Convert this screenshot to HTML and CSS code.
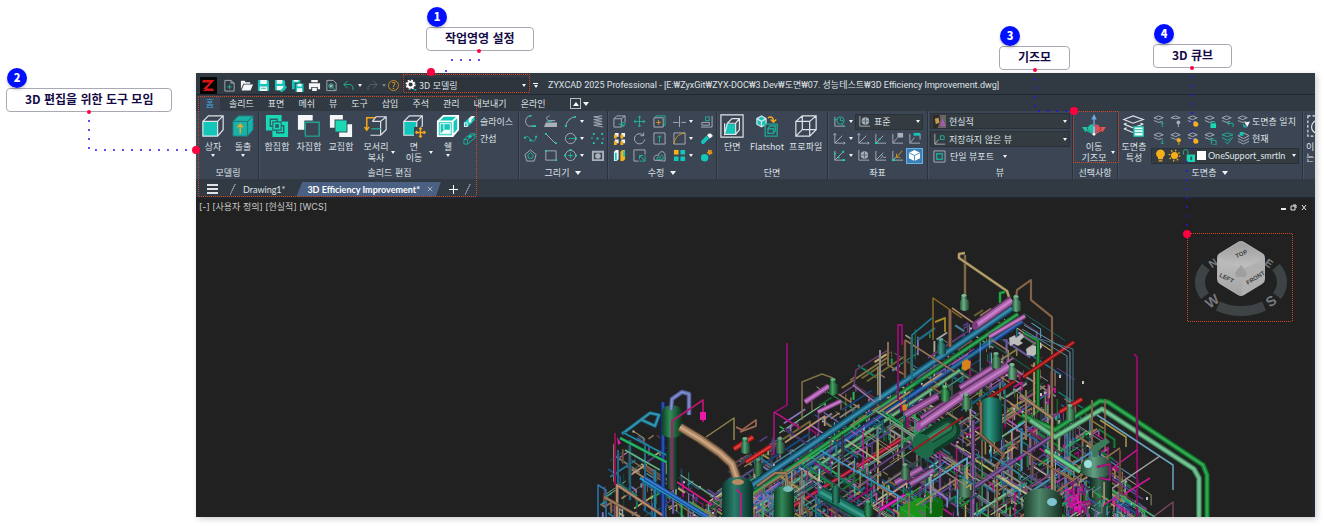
FILE: index.html
```html
<!DOCTYPE html>
<html lang="ko">
<head>
<meta charset="utf-8">
<title>ZYXCAD 2025 Professional</title>
<link rel="stylesheet" href="styles.css">
</head>
<body>
<svg class="defs" aria-hidden="true">
  <symbol id="i-new" viewBox="0 0 14 14"><path class="g" d="M2 1.500h6.500l3.500 3V13H2zM8.500 1.500v3H12"/><path class="t" d="M7 6v5M4.500 8.500h5"/></symbol>
  <symbol id="i-open" viewBox="0 0 14 14"><path class="wf" d="M1 2h4l1 1.500h5V5H3.500L1 11z"/><path class="wf" d="M4.200 6H14l-2.700 6.500H1.600z"/></symbol>
  <symbol id="i-save" viewBox="0 0 14 14"><path class="tf" d="M1 1h10.500L13 2.500V13H1z"/><path class="wf" d="M3.500 1h7v4.500h-7zM3 8h8v5H3z"/><path class="t" d="M4.500 10h5"/></symbol>
  <symbol id="i-saveas" viewBox="0 0 14 14"><path class="tf" d="M1 1h9.500L12 2.500V12H1z"/><path class="wf" d="M3 1h6v4H3zM3 7.500h7V12H3z"/><path class="tf" d="M7 12l5-5 2 2-5 5H7z"/></symbol>
  <symbol id="i-saveall" viewBox="0 0 14 14"><path class="tf" d="M1 1h9v3H4v7H1z"/><path class="tf" d="M5 5h8.500v9H5z"/><path class="wf" d="M3 1h5v2H3zM7 5h4.500v3H7zM6.500 10H12v4H6.500z"/></symbol>
  <symbol id="i-print" viewBox="0 0 14 14"><path class="wf" d="M3.500 1h7v2.500h-7zM1 4.500h12V11h-2.500V8.500h-7V11H1zM4.500 9.500h5V13h-5z"/></symbol>
  <symbol id="i-preview" viewBox="0 0 14 14"><path class="g" d="M2 12.500V1.500h7l3 3v8z"/><circle class="t" cx="6.500" cy="7.500" r="2.500"/><path class="gf" d="M5 6h3v3H5z"/><path class="t" d="M8.500 9.500L11 12"/></symbol>
  <symbol id="i-undo" viewBox="0 0 14 14"><path class="t" d="M6 2L2 6l4 4M2 6h6c3 0 4 2 4 6"/></symbol>
  <symbol id="i-redo" viewBox="0 0 14 14"><path class="d" d="M8 2l4 4-4 4M12 6H6c-3 0-4 2-4 6"/></symbol>
  <symbol id="i-gear" viewBox="0 0 14 14"><circle cx="6" cy="6" r="3.200" fill="none" stroke="#fff" stroke-width="2"/><circle cx="6" cy="6" r="4.700" fill="none" stroke="#fff" stroke-width="1.500" stroke-dasharray="1.900 1.800"/><path class="tf" d="M9 11h4l-2 2z"/></symbol>

  <symbol id="i-box" viewBox="0 0 26 26"><path class="tf" d="M2 8h16v16H2z"/><path class="W" d="M2 8h16v16H2zM2 8l6-6h16v15l-6 7M18 8l6-6"/></symbol>
  <symbol id="i-extrude" viewBox="0 0 26 26"><path fill="#18b3a8" d="M2 8l6-6h16v15l-6 7H2z"/><path class="D" d="M2 8h16v16M18 8l6-6M2 8l6-6h16v15l-6 7H2z"/><path class="Y" d="M10 21v-9M7 14.500l3-3.500 3 3.500"/></symbol>
  <symbol id="i-union" viewBox="0 0 26 26"><path class="ef" d="M1 1h17v7h7v17H8v-7H1z"/><path fill="#2a5f66" d="M5 5h9v3h-1.500V6.500h-6v6H8V14H5zM21 21h-9v-3h1.500v1.500h6v-6H18V12h3z"/><path fill="none" stroke="#2a5f66" stroke-width="1.200" d="M8.500 8.500h9v9h-9z"/><path fill="#2a5f66" d="M11 11h4v4h-4z"/></symbol>
  <symbol id="i-subtract" viewBox="0 0 26 26"><path class="wf" d="M1 1h16v6H8v10H1z"/><path class="t2" d="M9 9h15v15H9z"/></symbol>
  <symbol id="i-intersect" viewBox="0 0 26 26"><path class="wf" d="M1 1h14v5H6v9H1zM20 11h5v14H11v-5h9z"/><path class="ef" d="M7 7h12v12H7z"/></symbol>
  <symbol id="i-edgecopy" viewBox="0 0 26 26"><path class="W" d="M9 8l4-5h11v14l-6 6H7M9 8h9v15M18 8l6-5"/><path class="t2" d="M8 16h10"/><path class="Y" d="M12 4H3v13M0.500 14L3 17.500 5.500 14"/></symbol>
  <symbol id="i-facemove" viewBox="0 0 26 26"><path class="tf" d="M2 8h14v15H2z"/><path class="W" d="M2 8h14v15H2zM2 8l6-6h14v11l-5 6M16 8l6-6"/><path fill="#3b4554" d="M13 14h13v12H13z"/><path class="Y" d="M20 15v10M15 20h10M18.500 16.500L20 15l1.500 1.500M18.500 23.500L20 25l1.500-1.500M16.500 18.500L15 20l1.500 1.500M23.500 18.500L25 20l-1.500 1.500"/></symbol>
  <symbol id="i-shell" viewBox="0 0 26 26"><path class="tf" d="M2 8l6-6h16v15l-6 7H2z"/><path class="W2" d="M2 8h16v16H2zM2 8l6-6h16v15l-6 7M18 8l6-6"/><path fill="#fff" d="M4 10h12v12H4z"/><path class="tf" d="M5 11h10v10H5z"/><path fill="#fff" d="M5 21l4-4h6l0 4zM8 11h1v6H8z"/></symbol>
  <symbol id="i-slice" viewBox="0 0 14 14"><path class="tf" d="M1 8l7-6h4l1 3-8 8H1z"/><path class="wf" d="M6 4l3-3h4L9 5v3L6 8zM1 8h4v5L1 13z"/><path class="tf" d="M2 9h2v3H2z"/></symbol>
  <symbol id="i-interfere" viewBox="0 0 14 14"><path class="t" d="M1 8l7-6h5v4l-8 7H1zM1 8h4v5M5 8l8-6"/><path class="tf" d="M5 5l3 2 2-3-2-1z"/></symbol>

  <symbol id="i-pline" viewBox="0 0 14 14"><path class="g" d="M6 1C1 2 0 10 5 12h7"/><path class="T" d="M6 1h2M9 12h4"/></symbol>
  <symbol id="i-dpoly" viewBox="0 0 14 14"><path class="g" d="M6 1C2 2 2 5 5 6h7"/><path class="t" d="M3 7h6"/><path class="gf" d="M2 8h12v5H0z"/></symbol>
  <symbol id="i-arc" viewBox="0 0 14 14"><path class="g" d="M2 13C2 8 6 3 12 2"/><path class="T" d="M1 12h2M11 2h2M5 5h1"/></symbol>
  <symbol id="i-helix" viewBox="0 0 14 14"><path class="g" d="M12 1L3 2l9 2-9 1 9 2-9 1 9 2-9 1 10 2"/></symbol>
  <symbol id="i-spline" viewBox="0 0 14 14"><path class="t" d="M1 7c3-5 4-1 6 1s4 4 6-2"/><path class="T" d="M0 6h2M6 9h2M12 5h2"/></symbol>
  <symbol id="i-line" viewBox="0 0 14 14"><path class="g" d="M2 2l11 11"/><path class="T" d="M1 2h2M12 12h2"/></symbol>
  <symbol id="i-circle" viewBox="0 0 14 14"><circle class="g" cx="7" cy="7" r="5.500"/><path class="t" d="M5 7h8"/><path class="T" d="M12 7h2"/></symbol>
  <symbol id="i-points" viewBox="0 0 14 14"><path class="T" d="M2 2h2M11 2h2M6 7h2M2 12h2M11 12h2M1 6v1M13 7v1"/></symbol>
  <symbol id="i-poly" viewBox="0 0 14 14"><path class="g" d="M7 1l6 5-2 7H3L1 6z"/><path class="t" d="M7 4l3 2.500-1 3.500H5L4 6.500z"/></symbol>
  <symbol id="i-rect" viewBox="0 0 14 14"><path class="g" d="M2 2h11v10H2z"/><path class="T" d="M1 2h2M12 12h2"/></symbol>
  <symbol id="i-ellipse" viewBox="0 0 14 14"><circle class="g" cx="7" cy="7" r="5.500"/><path class="t" d="M7 4v6M4 7h6"/><path class="T" d="M6 1h2M12 7h2M0 7h2"/></symbol>
  <symbol id="i-region" viewBox="0 0 14 14"><path class="gf" fill-rule="evenodd" d="M1 2h13v11H1zM3 4h9v7H3z"/><circle class="gf" cx="7.500" cy="7.500" r="3"/></symbol>

  <symbol id="i-m3d" viewBox="0 0 14 14"><path class="g" d="M1 4l3-3h9v7M1 4h8v9H1zM9 4l4-3"/><path class="t" d="M6 10h5v3"/><circle class="t" cx="11" cy="10" r="2"/></symbol>
  <symbol id="i-move" viewBox="0 0 14 14"><path class="t" d="M7 1v12M1 7h12"/><path class="t" d="M5.500 3L7 1l1.500 2M5.500 11L7 13l1.500-2M3 5.500L1 7l2 1.500M11 5.500L13 7l-2 1.500"/></symbol>
  <symbol id="i-copy" viewBox="0 0 14 14"><path class="t" d="M3 3V1h10v10h-2"/><path class="g" d="M1 3h10v10H1z"/><path class="y" d="M6 5.500v5M3.500 8h5"/></symbol>
  <symbol id="i-trim" viewBox="0 0 14 14"><path class="g" d="M7 1v12M0 8h6M9 8h5"/></symbol>
  <symbol id="i-align" viewBox="0 0 14 14"><path class="g" d="M13 1v12H1M2 8h8v3H2z"/><path class="t" d="M6 2h4v4H6z"/></symbol>
  <symbol id="i-array3" viewBox="0 0 14 14"><path class="wf" d="M2 1h4v4H2zM9 1h4v4H9zM2 8h4v4H2zM9 8h4v4H9z"/><path class="yf" d="M1 3h3v4H1zM8 3h3v4H8zM1 10h3v4H1zM8 10h3v4H8z"/></symbol>
  <symbol id="i-rotate" viewBox="0 0 14 14"><path class="g" d="M11 3.500A5.500 5.500 0 1 0 12.500 8M11.500 0.500v3.500H8"/></symbol>
  <symbol id="i-stretch" viewBox="0 0 14 14"><path class="g" d="M1 1h12v12H1z"/><path class="t" d="M7 11V4M5 6l2-2 2 2"/></symbol>
  <symbol id="i-fillet" viewBox="0 0 14 14"><path class="g" d="M1 1h12v12H1z"/><path class="y" d="M1 13C2 6 6 2 13 1"/></symbol>
  <symbol id="i-erase" viewBox="0 0 14 14"><path class="tf" d="M1 10l6-6 3 3-6 6H2z"/><path class="wf" d="M7.500 3.500l2-2h2l2 2v1L10.500 7z"/></symbol>
  <symbol id="i-mirror" viewBox="0 0 14 14"><path class="wf" d="M1 3l2-2h3v10l-2 2H1z"/><path class="yf" d="M8 3l2-2h3v10l-2 2H8z"/><path class="tf" d="M2 4h2v8H2zM11 2h2v6h-2z"/></symbol>
  <symbol id="i-scale" viewBox="0 0 14 14"><path class="g" d="M6 13H1V1h12v5"/><path class="t" d="M7 7l6 6M7 11V7h4M7 13h6V7"/></symbol>
  <symbol id="i-offset" viewBox="0 0 14 14"><path class="g" d="M1 12c-1-5 3-6 5-5 0-5 7-6 7 0v6z"/><path class="t" d="M4 11c0-3 2-2 4-2 0-3 3-3 3 0v2z"/></symbol>
  <symbol id="i-array" viewBox="0 0 14 14"><path class="yf" d="M1 1h5v5H1z"/><path class="tf" d="M8 1h5v5H8zM1 8h5v5H1zM8 8h5v5H8z"/></symbol>
  <symbol id="i-explode" viewBox="0 0 14 14"><circle class="tf" cx="5" cy="9.500" r="4"/><circle cx="10.500" cy="3.500" r="2.200" fill="#dc981c" stroke="#dc981c" stroke-width="1.500" stroke-dasharray="1.500 1"/></symbol>

  <symbol id="i-section" viewBox="0 0 26 26"><path class="tf" d="M6 11h11v11H6z"/><path class="W" d="M1 1h24v24H1zM5 22l3-12h9v12zM8 10l5-5h8v12l-4 5M17 10l4-5M5 10v13"/></symbol>
  <symbol id="i-flatshot" viewBox="0 0 26 26"><path class="tf" d="M2 5l5-3 5 3v6l-5 3-5-3z"/><path class="W" d="M2 5l5-3 5 3v6l-5 3-5-3zM2 5l5 3 5-3M7 8v6"/><path class="Y" d="M14 4c5-2 6 1 6 4M17 6l3 3 3-3"/><path class="t2" d="M11 11h13v13H11zM14 16h6v5h-6zM14 16l2-3h6v5l-2 3"/></symbol>
  <symbol id="i-profile" viewBox="0 0 26 26"><path class="W" d="M2 8l7-6h15v15l-7 7H2zM2 8h15v16M17 8l7-6M9 2v15h15M9 17l-7 7"/></symbol>

  <symbol id="i-ucs" viewBox="0 0 14 14"><path class="g" d="M2 2v10h11M2 12l8-8M0.500 3.500L2 1.500l1.500 2M11.500 10.500l1.500 1.500-1.500 1.500"/></symbol>
  <symbol id="i-ucsview" viewBox="0 0 14 14"><path class="g" d="M2 2v10h11"/><circle class="t" cx="8" cy="6" r="4"/><path class="t" d="M8 3v3h3M1 5h4M10 10l3 3"/></symbol>
  <symbol id="i-ucsworld" viewBox="0 0 14 14"><path class="g" d="M2 1v11h11"/><circle class="gf" cx="8" cy="6.500" r="4"/><path class="d" d="M4.500 6.500h7M8 3v7"/></symbol>
  <symbol id="i-ucst" viewBox="0 0 14 14"><path class="g" d="M2 2v10h11M2 12l8-8"/><path class="T" d="M1 12h3M5 8h2"/></symbol>
  <symbol id="i-ucsobj" viewBox="0 0 14 14"><path class="g" d="M2 2v10h11M2 12l5-6"/><path class="gf" d="M7 1h6v5H7z"/></symbol>
  <symbol id="i-ucsface" viewBox="0 0 14 14"><path class="g" d="M2 2v10h11M2 12l5-6M7 2h6v6"/><path class="tf" d="M6 1h7v3H6z"/></symbol>
  <symbol id="i-ucs3" viewBox="0 0 14 14"><path class="g" d="M2 2v10h11M2 12l9-9"/><path class="T" d="M1 5h2M5 9h2M10 12h3M10 3h2"/></symbol>
  <symbol id="i-ucsz" viewBox="0 0 14 14"><path class="g" d="M2 2v10h11M2 12l8-8M7 10c2-1 3-3 1-4M10 9h3"/></symbol>
  <symbol id="i-ucsy" viewBox="0 0 14 14"><path class="g" d="M2 2v10h11M2 12l4-4"/><path class="y" d="M6 9l6-7M6 5v4h4"/><path class="T" d="M1 12h3"/></symbol>
  <symbol id="i-cube" viewBox="0 0 14 14"><path fill="#fff" d="M1 4l6-3 6 3v6l-6 3-6-3z"/><path fill="none" stroke="#4a8fc0" d="M1 4l6 3 6-3M7 7v6"/></symbol>

  <symbol id="i-real" viewBox="0 0 14 14"><path fill="#68645f" d="M0 0h14v14H0z"/><path fill="#2d2b29" d="M0 0h7l1 5-3 9H0z"/><path fill="#c29b51" d="M2 4l4-1 1 5-4 2z"/><path fill="#a45bb0" d="M10 3l4 9H8z"/></symbol>
  <symbol id="i-viewucs" viewBox="0 0 14 14"><path class="g" d="M2 1v11h11M2 12l4-5"/><path class="t" d="M8 3h4v4H8z"/></symbol>
  <symbol id="i-vport" viewBox="0 0 14 14"><path class="g" d="M1 1h12v12H1z"/><path class="t2" d="M4 4h6v6H4z"/></symbol>
  <symbol id="i-gizmo" viewBox="0 0 26 26"><path fill="#dfe8ee" d="M8 17l5 4 5-4-5-4z"/><path fill="#d94f55" d="M14 11c4 0 6 2 6 6l-6 3z"/><path fill="#1fc1a2" d="M12 11c-4 0-6 2-6 6l6 3z"/><path stroke="#6aa9e0" stroke-width="1.500" d="M13 20V5"/><path fill="#6aa9e0" d="M10 6l3-6 3 6z"/><path stroke="#1fc1a2" stroke-width="1.500" d="M13 22l-9-5"/><path fill="#1fc1a2" d="M0 14l6 0-2 6z"/><path stroke="#e95050" stroke-width="1.500" d="M13 22l9-5"/><path fill="#e95050" d="M26 14l-6 0 2 6z"/><circle class="wf" cx="13" cy="22" r="1.500"/></symbol>

  <symbol id="i-layers" viewBox="0 0 26 26"><path class="W" d="M2 6l10-4 11 4-11 4zM2 11l10 4 11-4M2 16l10 4M2 11l3-1M23 11l-3-1M2 16l3-1"/><path fill="#3b4554" d="M12 13h13v13H12z"/><path fill="#e8fffb" stroke="#19c9b4" stroke-width="1.500" d="M13 14h10v10H13z"/><path class="t" d="M14 17h8M14 20h8"/></symbol>
  <symbol id="i-lay" viewBox="0 0 14 14"><path class="g" d="M1 3l5-2 5 2-5 2zM1 6l5 2 4-1"/></symbol>
  <symbol id="i-lock" viewBox="0 0 14 14"><path class="t" d="M1.500 6V3a2.500 2.500 0 0 1 5 0v3"/><path class="ef" d="M5 6h9v8H5z"/><path fill="#2b5a5a" d="M9 8h2v4H9z"/></symbol>
  <symbol id="i-sun" viewBox="0 0 14 14"><circle class="yf" cx="7" cy="7" r="3.800"/><circle cx="7" cy="7" r="5.500" fill="none" stroke="#f5b01a" stroke-width="1.800" stroke-dasharray="1.300 3.020"/></symbol>
  <symbol id="i-bulb" viewBox="0 0 14 14"><path class="yf" d="M7 0.500a4.500 4.500 0 0 1 3 8L9.500 11h-5L4 8.500a4.500 4.500 0 0 1 3-8zM5 12h4v1.500H5z"/></symbol>
  <symbol id="i-marquee" viewBox="0 0 26 26"><path class="W" stroke-dasharray="3 2" d="M2 2h22v22H2z"/><circle class="W" cx="13" cy="14" r="7"/></symbol>
</svg>

<main class="page">
  <div class="app">
    <header class="titlebar">
      <svg class="logo" viewBox="0 0 17 17"><path fill="#050505" d="M0 0h17v17H0z"/><path fill="#d81414" d="M3 3h11.500L6.500 12H3L9.500 5.500H2zM14 14H2.500l4-2.500H13z"/></svg>
      <nav class="quick" aria-label="빠른 실행">
        <button aria-label="새로 만들기"><svg><use href="#i-new"/></svg></button>
        <button aria-label="열기"><svg><use href="#i-open"/></svg></button>
        <button aria-label="저장"><svg><use href="#i-save"/></svg></button>
        <button aria-label="다른 이름으로 저장"><svg><use href="#i-saveas"/></svg></button>
        <button aria-label="모두 저장"><svg><use href="#i-saveall"/></svg></button>
        <button aria-label="인쇄"><svg><use href="#i-print"/></svg></button>
        <button aria-label="미리보기"><svg><use href="#i-preview"/></svg></button>
        <button class="wide" aria-label="실행 취소"><svg><use href="#i-undo"/></svg><i class="caret"></i></button>
        <button class="wide" aria-label="다시 실행"><svg><use href="#i-redo"/></svg><i class="caret dim"></i></button>
        <button class="help" aria-label="도움말">?</button>
      </nav>
      <label class="combo workspace"><svg><use href="#i-gear"/></svg><select aria-label="작업 공간"><option>3D 모델링</option></select><i class="caret"></i></label>
      <button class="more" aria-label="사용자화"><i class="caret"></i></button>
      <h1>ZYXCAD 2025 Professional - [E:₩ZyxGit₩ZYX-DOC₩3.Dev₩도면₩07. 성능테스트₩3D Efficiency Improvement.dwg]</h1>
    </header>

    <nav class="tabs">
      <button class="on">홈</button><button>솔리드</button><button>표면</button><button>메쉬</button><button>뷰</button><button>도구</button><button>삽입</button><button>주석</button><button>관리</button><button>내보내기</button><button>온라인</button>
      <button class="collapse" aria-label="리본 최소화"><span class="upbox"><i class="up"></i></span><i class="caret"></i></button>
    </nav>

    <section class="ribbon">
      <div class="panel p-model">
        <div class="body">
          <button class="big b30"><svg><use href="#i-box"/></svg>상자<i class="caret"></i></button>
          <button class="big b30"><svg><use href="#i-extrude"/></svg>돌출<i class="caret"></i></button>
        </div>
        <h2>모델링</h2>
      </div>
      <div class="panel p-solid">
        <div class="body">
          <button class="big b32"><svg><use href="#i-union"/></svg>합집합</button>
          <button class="big b32"><svg><use href="#i-subtract"/></svg>차집합</button>
          <button class="big b32"><svg><use href="#i-intersect"/></svg>교집합</button>
          <button class="big b38 side"><svg><use href="#i-edgecopy"/></svg>모서리<br>복사<i class="caret"></i></button>
          <button class="big b38 side"><svg><use href="#i-facemove"/></svg>면<br>이동<i class="caret"></i></button>
          <button class="big b30"><svg><use href="#i-shell"/></svg>쉘<i class="caret"></i></button>
          <div class="rows">
            <button class="line"><svg><use href="#i-slice"/></svg>슬라이스</button>
            <button class="line"><svg><use href="#i-interfere"/></svg>간섭</button>
          </div>
        </div>
        <h2>솔리드 편집</h2>
      </div>
      <div class="panel p-draw">
        <div class="icons draw">
          <button aria-label="폴리선"><svg><use href="#i-pline"/></svg></button><button aria-label="3D 폴리선"><svg><use href="#i-dpoly"/></svg></button><button aria-label="호"><svg><use href="#i-arc"/></svg></button><i class="caret"></i><button aria-label="나선"><svg><use href="#i-helix"/></svg></button>
          <button aria-label="스플라인"><svg><use href="#i-spline"/></svg></button><button aria-label="선"><svg><use href="#i-line"/></svg></button><button aria-label="원"><svg><use href="#i-circle"/></svg></button><i class="caret"></i><button aria-label="점"><svg><use href="#i-points"/></svg></button>
          <button aria-label="다각형"><svg><use href="#i-poly"/></svg></button><button aria-label="직사각형"><svg><use href="#i-rect"/></svg></button><button aria-label="타원"><svg><use href="#i-ellipse"/></svg></button><i class="caret"></i><button aria-label="영역"><svg><use href="#i-region"/></svg></button>
        </div>
        <h2>그리기<i class="caret"></i></h2>
      </div>
      <div class="panel p-modify">
        <div class="icons modify">
          <button aria-label="3D 이동"><svg><use href="#i-m3d"/></svg></button><button aria-label="이동"><svg><use href="#i-move"/></svg></button><button aria-label="복사"><svg><use href="#i-copy"/></svg></button><button aria-label="자르기"><svg><use href="#i-trim"/></svg></button><i class="caret"></i><button aria-label="정렬"><svg><use href="#i-align"/></svg></button>
          <button aria-label="3D 배열"><svg><use href="#i-array3"/></svg></button><button aria-label="회전"><svg><use href="#i-rotate"/></svg></button><button aria-label="신축"><svg><use href="#i-stretch"/></svg></button><button aria-label="모깎기"><svg><use href="#i-fillet"/></svg></button><i class="caret"></i><button aria-label="지우기"><svg><use href="#i-erase"/></svg></button>
          <button aria-label="대칭"><svg><use href="#i-mirror"/></svg></button><button aria-label="축척"><svg><use href="#i-scale"/></svg></button><button aria-label="간격띄우기"><svg><use href="#i-offset"/></svg></button><button aria-label="배열"><svg><use href="#i-array"/></svg></button><i class="caret"></i><button aria-label="분해"><svg><use href="#i-explode"/></svg></button>
        </div>
        <h2>수정<i class="caret"></i></h2>
      </div>
      <div class="panel p-section">
        <div class="body">
          <button class="big b30"><svg><use href="#i-section"/></svg>단면</button>
          <button class="big b38"><svg><use href="#i-flatshot"/></svg>Flatshot</button>
          <button class="big b38"><svg><use href="#i-profile"/></svg>프로파일</button>
        </div>
        <h2>단면</h2>
      </div>
      <div class="panel p-coord">
        <div class="icons coord">
          <button aria-label="UCS 뷰"><svg><use href="#i-ucsview"/></svg></button><i class="caret"></i><label class="combo span4"><svg><use href="#i-ucsworld"/></svg><select aria-label="좌표계"><option>표준</option></select><i class="caret"></i></label>
          <button aria-label="UCS"><svg><use href="#i-ucs"/></svg></button><i class="caret"></i><button aria-label="UCS 이전"><svg><use href="#i-ucs"/></svg></button><button aria-label="UCS 원점"><svg><use href="#i-ucst"/></svg></button><button aria-label="UCS 객체"><svg><use href="#i-ucsobj"/></svg></button><button aria-label="UCS 면"><svg><use href="#i-ucsface"/></svg></button>
          <button aria-label="UCS 3점"><svg><use href="#i-ucs3"/></svg></button><i class="caret"></i><button aria-label="표준 UCS"><svg><use href="#i-ucsworld"/></svg></button><button aria-label="UCS Z축"><svg><use href="#i-ucsz"/></svg></button><button aria-label="UCS Y축"><svg><use href="#i-ucsy"/></svg></button><button class="pressed" aria-label="뷰 큐브"><svg><use href="#i-cube"/></svg></button>
        </div>
        <h2>좌표</h2>
      </div>
      <div class="panel p-view">
        <div class="stack">
          <label class="combo"><svg><use href="#i-real"/></svg><select aria-label="비주얼 스타일"><option>현실적</option></select><i class="caret"></i></label>
          <label class="combo"><svg><use href="#i-viewucs"/></svg><select aria-label="저장된 뷰"><option>저장하지 않은 뷰</option></select><i class="caret"></i></label>
          <button class="line"><svg><use href="#i-vport"/></svg>단일 뷰포트<i class="caret"></i></button>
        </div>
        <h2>뷰</h2>
      </div>
      <div class="panel p-gizmo">
        <div class="body">
          <button class="big b42 side"><svg><use href="#i-gizmo"/></svg>이동<br>기즈모<i class="caret"></i></button>
        </div>
        <h2>선택사항</h2>
      </div>
      <div class="panel p-layer">
        <div class="body">
          <button class="big b32"><svg><use href="#i-layers"/></svg>도면층<br>특성</button>
          <div class="icons layer">
            <button aria-label="도면층 켜기"><svg viewBox="0 0 14 14"><use href="#i-lay"/><path class="t" d="M10 13V8M8.500 9.500L10 8l1.500 1.500"/></svg></button><button aria-label="도면층 끄기"><svg viewBox="0 0 14 14"><path class="g" d="M1 3l5-2 5 2-5 1z"/><circle class="gf" cx="9" cy="8" r="2"/><path class="g" d="M9 9v4"/></svg></button><button aria-label="도면층 동결"><svg viewBox="0 0 14 14"><use href="#i-lay"/><circle class="yf" cx="9.500" cy="10" r="2.700"/></svg></button><button aria-label="도면층 잠금"><svg viewBox="0 0 14 14"><use href="#i-lay"/><path class="ef" d="M7 9h6v5H7z"/><path class="t" d="M8.500 9V7h3v2"/></svg></button><button aria-label="도면층 이전"><svg viewBox="0 0 14 14"><use href="#i-lay"/><path class="t" d="M13 13V9H7M9 7L7 9l2 2"/></svg></button><button class="line wideline"><svg viewBox="0 0 14 14"><use href="#i-lay"/><path class="wf" d="M8 8l6-1-3 6z"/><path class="tf" d="M6 9l5 5-4-1z"/></svg>도면층 일치</button>
            <button aria-label="도면층 분리"><svg viewBox="0 0 14 14"><use href="#i-lay"/><path class="t" d="M10 8v5M8.500 11.500L10 13l1.500-1.500"/></svg></button><button aria-label="모두 켜기"><svg viewBox="0 0 14 14"><use href="#i-lay"/><circle class="yf" cx="9.500" cy="9" r="2.300"/><path class="y" d="M9.500 10v4"/></svg></button><button aria-label="동결 해제"><svg viewBox="0 0 14 14"><use href="#i-lay"/><circle class="yf" cx="9.500" cy="10" r="2.700"/></svg></button><button aria-label="잠금 해제"><svg viewBox="0 0 14 14"><use href="#i-lay"/><path class="t" d="M8 13V9h5v5H8M7 9V7h3"/></svg></button><button aria-label="현재로"><svg viewBox="0 0 14 14"><path class="t" d="M1 3l6-2 6 2-6 2zM1 6l6 3 6-3M4 10l3 3 4-5"/></svg></button><button class="line wideline"><svg viewBox="0 0 14 14"><path class="g" d="M1 4l6-3 6 3-6 3zM1 7l6 3 6-3M1 10l6 3 6-3"/><path class="tf" d="M3 0h4v4H3z"/></svg>현재</button>
            <label class="combo current"><svg><use href="#i-bulb"/></svg><svg><use href="#i-sun"/></svg><svg><use href="#i-lock"/></svg><span class="swatch"></span><select aria-label="현재 도면층"><option>OneSupport_smrtln</option></select><i class="caret"></i></label>
          </div>
        </div>
        <h2>도면층<i class="caret"></i></h2>
      </div>
      <div class="panel p-rest">
        <button class="big cut"><svg><use href="#i-marquee"/></svg>이<br>는</button>
      </div>
    </section>

    <nav class="docs">
      <button class="menu" aria-label="메뉴"><i></i><i></i><i></i></button>
      <span class="slash"></span>
      <button class="doc">Drawing1*</button>
      <button class="doc active"><span>3D Efficiency Improvement*</span><svg viewBox="0 0 8 8"><path d="M1 1l6 6M7 1L1 7"/></svg></button>
      <button class="plus" aria-label="새 탭"></button>
      <span class="slash"></span>
    </nav>

    <section class="viewport">
      <p class="vinfo">[-] [사용자 정의] [현실적] [WCS]</p>
      <svg class="wctl" viewBox="0 0 28 8"><path d="M1 6h5" stroke-width="2"/><path d="M11 3h4v4h-4zM13 2h3v3M22 2l4 5M26 2l-4 5"/></svg>
      <svg id="plant" class="plant" viewBox="590 245 670 272" role="img" aria-label="플랜트 배관 모델"></svg>
      <svg class="viewcube" viewBox="0 0 104 88">
        <defs><linearGradient id="cubeTop" x1="0" y1="0" x2="0" y2="1"><stop offset="0" stop-color="#a2a2a2"/><stop offset="1" stop-color="#bdbdbd"/></linearGradient><linearGradient id="cubeSide" x1="0" y1="0" x2="0" y2="1"><stop offset="0" stop-color="#bcbcbc"/><stop offset="1" stop-color="#a6a6a6"/></linearGradient></defs>
        <g fill="none" stroke="#3e4346" stroke-width="10"><path d="M19 34A41 29 0 0 0 18 63M89 34A41 29 0 0 1 90 63M31 73A41 29 0 0 0 77 73"/></g>
        <g class="compass"><text x="26" y="34" transform="rotate(-35 26 30)">N</text><text x="82" y="34" transform="rotate(35 82 30)">E</text><text class="lg" x="25" y="73" transform="rotate(-35 25 68)">W</text><text class="lg" x="84" y="73" transform="rotate(-35 84 68)">S</text></g>
        <path fill="#b0b0b0" stroke="#b0b0b0" stroke-width="12" stroke-linejoin="round" d="M54 14L72 25v21L54 57 36 46V25z"/>
        <path fill="url(#cubeTop)" stroke="url(#cubeTop)" stroke-width="8" stroke-linejoin="round" d="M54 13L72 24 54 32 36 24z"/>
        <path fill="url(#cubeSide)" stroke="url(#cubeSide)" stroke-width="4" stroke-linejoin="round" d="M33 27l20 11v22L33 47z"/>
        <path fill="#9f9f9f" d="M54 32l6 8-1 4H49l-1-4z"/>
        <g class="faces"><text x="54" y="23" transform="rotate(-24 54 20)">TOP</text><text x="40" y="47" transform="rotate(26 40 44)">LEFT</text><text x="68" y="47" transform="rotate(-32 68 44)">FRONT</text></g>
      </svg>
    </section>
  </div>

  <div class="note n1"><b>1</b><span>작업영영 설정</span></div>
  <div class="note n2"><b>2</b><span>3D 편집을 위한 도구 모임</span></div>
  <div class="note n3"><b>3</b><span>기즈모</span></div>
  <div class="note n4"><b>4</b><span>3D 큐브</span></div>
  <svg class="guides" viewBox="0 0 1324 526" aria-hidden="true">
    <g class="frames"><path d="M403 74h126v18H403zM198 96h278v100H198zM1073 111h45v51h-45z"/><path d="M1187 233h105v88h-105z"/></g>
    <g class="dots"><path d="M479 60H446"/><path d="M446 71h-9"/><path d="M89 121v29h105"/><path d="M1035 79v28M1039 111h30M1192 77v74M1187 162v64"/></g>
    <g fill="#ff0040"><circle cx="431" cy="72" r="4"/><circle cx="479" cy="51" r="2"/><circle cx="89" cy="112" r="2"/><circle cx="196" cy="150" r="4"/><circle cx="1035" cy="70" r="2"/><circle cx="1074" cy="111" r="4"/><circle cx="1192" cy="68" r="2"/><circle cx="1187" cy="234" r="4"/></g>
  </svg>
</main>
<script src="plant.js"></script>
</body>
</html>
```

FILE: styles.css
```css
* { box-sizing: border-box; }
body { margin: 0; background: #fff; font-family: "Noto Sans CJK KR", sans-serif; font-size: 9px; line-height: 11px; color: #dfe2e6; }
button, select { font: inherit; color: inherit; background: none; border: 0; padding: 0; margin: 0; }
h1, h2, p { margin: 0; font-size: 9px; font-weight: 400; }
svg { display: block; flex: none; }
.defs { position: absolute; width: 0; height: 0; }

.g, .t, .d, .y { fill: none; stroke-width: 1; }
.g { stroke: #a9b0b8; }
.t { stroke: #1fb39c; }
.d { stroke: #59636f; }
.y { stroke: #dc981c; }
.T { fill: none; stroke: #19d0b0; stroke-width: 2; }
.t2 { fill: none; stroke: #1fa593; stroke-width: 1.5; }
.W { fill: none; stroke: #dfe3e7; stroke-width: 1.3; }
.W2 { fill: none; stroke: #fff; stroke-width: 2; }
.D { fill: none; stroke: #2a6a74; stroke-width: 1; }
.Y { fill: none; stroke: #f5a81a; stroke-width: 1.6; }
.tf { fill: #12c6ba; }
.ef { fill: #1bd8b4; }
.wf { fill: #f4f6f7; }
.gf { fill: #a9b0b8; }
.yf { fill: #f5b01a; }

.page { position: relative; display: flex; min-height: 100vh; padding: 73px 9px 9px 196px; overflow: hidden; }
.app { flex: 1; min-width: 0; display: flex; flex-direction: column; background: #313943; box-shadow: 2px 2px 6px #0003; overflow: hidden; }

.caret { display: inline-block; flex: none; width: 0; height: 0; border: solid transparent; border-width: 3px 2px 0; border-top-color: #f2f4f5; }
.caret.dim { border-top-color: #77808a; }

.titlebar { display: flex; align-items: center; height: 22px; padding: 4px 0 0 4px; border-bottom: 1px solid #232830; }
.logo { width: 17px; height: 17px; margin-right: 4px; }
.quick { display: flex; align-items: center; }
.quick button { width: 17px; height: 16px; display: flex; align-items: center; justify-content: center; gap: 3px; }
.quick svg { width: 13px; height: 13px; }
.quick .wide { width: 24px; }
.quick .help { width: 11px; height: 11px; border: 1px solid #c88a20; border-radius: 50%; color: #e09a20; line-height: 9px; }
.combo { display: flex; align-items: center; gap: 3px; height: 16px; padding: 0 2px; background: #343c42; border: 1px solid #2b3138; }
.combo svg { width: 13px; height: 13px; }
.combo select { flex: 1; min-width: 0; height: 14px; appearance: none; outline: 0; }
.workspace { width: 127px; gap: 1px; margin-left: 3px; background: #2d343c; }
.more { display: flex; justify-content: center; width: 5px; margin: 0 10px 0 4px; padding-top: 1px; border-top: 1px solid #fff; }
.titlebar h1 { font-family: Roboto, "Noto Sans CJK KR", sans-serif; white-space: nowrap; }
.doc, .combo.current select { font-family: Lato, "Noto Sans CJK KR", sans-serif; white-space: nowrap; }

.tabs { display: flex; gap: 14px; height: 16px; padding-top: 1px; }
.tabs button { white-space: nowrap; }
.tabs .on { width: 20px; margin: 0 -5px 0 4px; background: #3b4554; color: #4aa9e0; }
.tabs .collapse { display: flex; align-items: center; gap: 2px; margin-left: 11px; }
.upbox { display: flex; align-items: center; justify-content: center; width: 11px; height: 11px; border: 1px solid #b9bec4; }
.up { border: solid transparent; border-width: 0 3px 4px; border-bottom-color: #fff; }
.tabs .caret { border-width: 4px 3px 0; }

.ribbon { display: flex; height: 68px; background: #3b4554; }
.panel { flex: none; display: flex; flex-direction: column; justify-content: space-between; padding-top: 2px; border-right: 1px solid #2b323c; box-shadow: inset 1px 0 #465160; }
.panel h2 { display: flex; align-items: center; justify-content: center; gap: 6px; height: 13px; white-space: nowrap; }
.panel h2 .caret { border-width: 4px 3px 0; }
.body { display: flex; align-items: flex-start; }
.p-model { width: 63px; padding-left: 2px; }
.p-solid { width: 260px; padding-left: 2px; }
.p-draw { width: 89px; }
.p-modify { width: 109px; }
.p-section { width: 111px; }
.p-coord { width: 100px; }
.p-view { width: 145px; }
.p-gizmo { width: 45px; }
.p-layer { width: 185px; }
.p-rest { flex: 1; min-width: 0; overflow: hidden; padding-left: 3px; border-right: 0; }
.p-section .body { justify-content: space-around; padding-right: 2px; }

.big { position: relative; flex: none; display: block; text-align: center; white-space: nowrap; }
.big svg { width: 24px; height: 24px; margin: 1px auto 3px; }
.big > .caret { display: block; width: 4px; margin: 2px auto 0; }
.big.side > .caret { position: absolute; right: 0; bottom: 9px; }
.big.cut { width: 9px; text-align: left; }
.b30 { width: 30px; }
.b32 { width: 32px; }
.b38 { width: 38px; }
.b42 { width: 42px; }
.rows { display: grid; grid-auto-rows: 17px; }
.line { display: flex; align-items: center; gap: 4px; white-space: nowrap; }
.line svg { width: 13px; height: 13px; }

.icons { display: grid; grid-auto-rows: 17px; align-items: center; justify-items: center; padding-left: 1px; }
.icons button { display: flex; align-items: center; justify-content: center; width: 17px; height: 16px; }
.icons svg { width: 13px; height: 13px; }
.icons > .caret { justify-self: start; }
.draw { grid-template-columns: 20px 20px 20px 7px 20px; }
.modify { grid-template-columns: 20px 20px 20px 20px 7px 20px; }
.coord { grid-template-columns: 20px 6px repeat(4, 17px); }
.span4 { grid-column: span 4; width: 100%; }
.icons .pressed { background: #3c7fb0; border: 1px solid #66b2e6; }
.layer { grid-template-columns: repeat(5, 17px) 63px; }
.layer .wideline { width: 100%; justify-content: flex-start; gap: 2px; padding-left: 1px; }
.current { grid-column: 1 / -1; width: 148px; gap: 1px; }
.swatch { width: 9px; height: 9px; margin: 0 1px; background: #fff; }
.stack { display: grid; gap: 2px; padding: 0 2px; }
.stack .line { height: 15px; padding-left: 3px; }
.stack .line .caret { margin-left: 5px; }

.docs { display: flex; align-items: center; height: 20px; padding: 2px 0 0 11px; border-bottom: 2px solid #202630; }
.menu { display: grid; gap: 2px; width: 11px; margin-right: 9px; }
.menu i { height: 2px; background: #dfe2e6; }
.slash { width: 11px; height: 11px; background: linear-gradient(115deg, transparent 46%, #7d8691 47%, #7d8691 54%, transparent 55%); }
.doc { height: 15px; padding: 0 8px 0 5px; }
.doc.active { display: flex; align-items: center; gap: 7px; margin-left: 3px; padding: 0 8px 0 11px; background: #4a6083; color: #fff; font-weight: 700; clip-path: polygon(6px 0, 100% 0, calc(100% - 5px) 100%, 0 100%); }
.doc svg { width: 6px; height: 6px; stroke: #c7ced8; }
.plus { width: 9px; height: 9px; margin: 0 4px 0 8px; background: linear-gradient(#fff, #fff) center / 9px 1px no-repeat, linear-gradient(#fff, #fff) center / 1px 9px no-repeat; }

.viewport { position: relative; flex: 1; display: flex; flex-direction: column; justify-content: flex-end; min-height: 318px; background: #212121; border-right: 3px solid #20242e; }
.vinfo { position: absolute; left: 3px; top: 2px; color: #c9c9c9; font-family: Inter, "Noto Sans CJK KR", sans-serif; }
.wctl { position: absolute; right: 4px; top: 4px; width: 28px; height: 8px; fill: none; stroke: #e8e8e8; }
.plant { width: 670px; height: 272px; margin-left: auto; margin-right: 52px; }
.viewcube { position: absolute; right: 21px; top: 34px; width: 104px; height: 88px; }
.compass, .faces { text-anchor: middle; font-family: "Liberation Sans", sans-serif; font-weight: 700; }
.compass { fill: #777b7e; font-size: 11px; }
.compass .lg { font-size: 14px; }
.faces { fill: #3d3d3d; font-size: 6px; }

.guides { position: absolute; left: 0; top: 0; width: 1324px; height: 526px; pointer-events: none; }
.frames { fill: none; stroke: #d4461e; stroke-width: 1; stroke-dasharray: 1 1; shape-rendering: crispEdges; }
.dots { fill: none; stroke: #2a12e6; stroke-width: 2; stroke-linecap: round; stroke-dasharray: 0 9; }
.note { position: absolute; padding: 3px 18px 0; height: 24px; background: #fff; border: 1px solid #a9a9b4; border-radius: 4px; color: #150b45; font: 700 12px/14px "Noto Sans CJK KR", sans-serif; white-space: nowrap; text-align: center; }
.note b { position: absolute; left: 0; top: -21px; width: 20px; height: 20px; border-radius: 50%; background: #0010ff; color: #fff; font-size: 11px; line-height: 19px; box-shadow: 0 2px 3px #0003; }
.n1 { left: 426px; top: 27px; }
.n2 { left: 6px; top: 88px; }
.n3 { left: 999px; top: 46px; }
.n4 { left: 1153px; top: 44px; }
```

FILE: plant.js
```js
// Draws the isometric piping model of the viewport.
(function () {
  var out = [];
  var seed = 41;
  function rnd() { seed = (seed * 16807) % 2147483647; return seed / 2147483647; }
  function pick(a) { return a[Math.floor(rnd() * a.length)]; }
  function shade(hex, k) {
    return '#' + [1, 3, 5].map(function (i) {
      var v = parseInt(hex.substr(i, 2), 16);
      v = k < 1 ? v * k : v + (255 - v) * (k - 1);
      return ('0' + Math.round(v).toString(16)).slice(-2);
    }).join('');
  }
  function pipe(pts, color, w, cap) {
    var a = '<polyline fill="none" stroke-linejoin="round" ' + (cap ? 'stroke-linecap="round" ' : '') + 'points="' + pts + '" ';
    if (w < 2) { out.push(a + 'stroke="' + color + '" stroke-width="' + w + '"/>'); return; }
    out.push(a + 'stroke="' + shade(color, 0.5) + '" stroke-width="' + w + '"/>');
    out.push(a + 'stroke="' + shade(color, 0.88) + '" stroke-width="' + w * 0.7 + '"/>');
    if (w > 3) out.push(a + 'stroke="' + shade(color, 1.15) + '" stroke-width="' + w * 0.25 + '"/>');
  }
  function grad(id, c) {
    return '<linearGradient id="' + id + '"><stop offset="0" stop-color="' + shade(c, 0.5) + '"/><stop offset=".4" stop-color="' + shade(c, 1.1) + '"/><stop offset="1" stop-color="' + shade(c, 0.4) + '"/></linearGradient>';
  }
  var gid = 0;
  function tank(x, y, w, h, c) {
    var id = 'tk' + gid++, d = w * 0.32;
    out.push('<defs>' + grad(id, c) + '</defs><path fill="url(#' + id + ')" d="M' + x + ' ' + (y + d) + 'C' + x + ' ' + (y - d * 0.3) + ' ' + (x + w) + ' ' + (y - d * 0.3) + ' ' + (x + w) + ' ' + (y + d) + 'V' + (y + h - d / 2) + 'Q' + (x + w / 2) + ' ' + (y + h + d / 2) + ' ' + x + ' ' + (y + h - d / 2) + 'z"/>');
  }
  function valve(x, y, c) {
    tank(x - 3, y, 6, 8, c);
    tank(x - 4, y + 5, 9, 12, c);
    out.push('<ellipse cx="' + x + '" cy="' + (y + 1.5) + '" rx="2.500" ry="1.200" fill="' + shade(c, 1.25) + '"/>');
  }
  var palette = ['#b38a6a', '#a67c5c', '#c9a27c', '#2a8fb8', '#2468b0', '#1f9c45', '#7fc79a', '#d4189f', '#8a55a8', '#c46cc8', '#6a4ea8', '#9a8f4c', '#c9b46a', '#a8a8a8', '#1a9a86', '#7a4a66', '#62b0d0', '#2a5a48', '#33556a', '#c8c8a0', '#8a7ad0', '#2ac060'];

  function clutter(n, poly, minW, maxW, len) {
    function top(x) {
      for (var i = 1; i < poly.length; i++) {
        var a = poly[i - 1], b = poly[i];
        if (x <= b[0]) return a[1] + (b[1] - a[1]) * (x - a[0]) / (b[0] - a[0]);
      }
      return 517;
    }
    var x0 = poly[0][0], x1 = poly[poly.length - 1][0];
    for (var i = 0; i < n; i++) {
      var x = x0 + rnd() * (x1 - x0), t = top(x), y = t + rnd() * (519 - t);
      var l = 4 + rnd() * rnd() * len, k = rnd(), c = shade(pick(palette), 0.75 + rnd() * 0.24), w = minW + rnd() * (maxW - minW);
      var s = k < 0.3 ? [0, Math.min(l, 517 - y)] : k < 0.64 ? [l, l * 0.66] : [l, -l * 0.66];
      if (k >= 0.64 && y + s[1] < top(x + l)) continue;
      var p = x.toFixed(1) + ',' + y.toFixed(1) + ' ' + (x + s[0]).toFixed(1) + ',' + (y + s[1]).toFixed(1);
      if (rnd() < 0.3) p += ' ' + (x + s[0]).toFixed(1) + ',' + (y + s[1] + 4 + rnd() * 8).toFixed(1);
      pipe(p, c, w);
      if (rnd() < 0.05) out.push('<path fill="#b4b4b4" d="M' + x.toFixed(1) + ' ' + y.toFixed(1) + 'h2v2h-2z"/>');
    }
  }
  var right = [[705, 505], [735, 458], [762, 438], [778, 428], [800, 400], [815, 386], [845, 388], [855, 366], [888, 348], [908, 332], [928, 320], [946, 326], [958, 312], [990, 304], [1015, 302], [1030, 312], [1044, 345], [1060, 370], [1066, 405], [1095, 415], [1108, 445], [1125, 475], [1145, 517]];
  var core = [[740, 500], [820, 445], [880, 405], [940, 365], [1000, 330], [1030, 350], [1060, 400], [1090, 440], [1125, 517]];
  var left = [[600, 495], [614, 440], [632, 428], [650, 420], [672, 455], [692, 475], [722, 500]];
  clutter(800, right, 0.7, 2.600, 64);
  clutter(150, left, 0.6, 2.200, 44);

  // rack of parallel headers
  pipe('735,497 1012,308', '#1f7ba0', 7);
  pipe('742,501 1018,314', '#1c9c44', 5);
  pipe('746,507 1022,321', '#1d5cac', 6);
  pipe('760,505 960,370', '#66b482', 4);
  pipe('768,508 965,375', '#4a9a8a', 2);
  pipe('790,508 905,437', '#c42040', 4);
  pipe('796,511 930,427', '#55a0a0', 2);
  clutter(520, core, 0.7, 2.600, 70);

  // left unit
  pipe('663,402 663,517', '#1a3fae', 5);
  pipe('622,434 650,413 659,415 655,426 642,420', '#2590b0', 4);
  pipe('618,450 618,517', '#2b86b0', 2);
  pipe('630,440 630,500', '#27708c', 3);
  pipe('645,445 645,510', '#2a8aac', 2);
  pipe('655,470 655,517', '#2590b0', 3);
  pipe('622,432 666,455', '#2ca4c8', 2);
  pipe('620,438 670,464', '#2acb72', 3);
  pipe('625,450 660,470', '#6fd69a', 2);
  pipe('615,433 615,485', '#b81a68', 2);
  pipe('598,517 598,485 606,490 606,517', '#2a78b8', 1.500);
  pipe('617,517 617,485 662,515', '#d49c78', 3);
  pipe('640,478 705,517', '#2bb0e6', 3);
  pipe('645,478 708,517', '#2a72d8', 4);
  pipe('604,497 640,517', '#b38a6a', 3);
  tank(667, 430, 11, 60, '#17593a');
  tank(662, 405, 20, 33, '#1b8046');
  pipe('671,410 672,399 682,392 689,394 689,415', '#7080c8', 5);
  pipe('672,490 672,421 703,400 703,422', '#b8156e', 1.800);
  out.push('<path fill="#e818a8" d="M700 412h6v8h-6zM617 437l4 6-3 2z"/>');
  pipe('677,482 712,505', '#e0168a', 1.500);
  pipe('706,437 734,418 734,440', '#8f8548', 1.500);
  pipe('736,427 742,430 756,420 756,426 740,432', '#b07a62', 2);
  pipe('734,449 753,437', '#dc2222', 6);
  pipe('746,462 771,446', '#dc2222', 5);
  valve(745, 437, '#3f9a68'); valve(780, 437, '#3f8a60'); valve(758, 458, '#2d7a4c');
  pipe('680,427 700,439 720,453 732,464 738,482', '#c49870', 9);
  tank(722, 477, 31, 46, '#15705c');
  out.push('<ellipse cx="738" cy="482" rx="6" ry="3" fill="#b88a64"/>');
  pipe('736,489 741,494 741,517', '#d0158a', 1.500);
  pipe('757,486 775,473 786,473 788,486', '#b38a66', 3);
  tank(774, 486, 20, 40, '#1c7d48');
  out.push('<ellipse cx="788" cy="489" rx="5" ry="3" fill="#78bcb8"/>');

  // middle background towers
  pipe('787,343 787,405 775,412', '#b2158c', 2);
  pipe('774,412 774,455', '#b0148c', 1.500);
  pipe('774,412 800,428', '#e01aa0', 2);
  pipe('802,420 802,382 822,374 833,378', '#7f7048', 1.500);
  pipe('805,402 829,386', '#c46cc6', 6);
  pipe('818,412 841,401', '#c46cc6', 5);
  valve(833, 378, '#2f9a50');
  pipe('854,385 856,370 888,350', '#7a4a7a', 2);
  pipe('853,385 875,402', '#b48ac0', 2);
  pipe('880,350 880,400', '#b8b8c8', 2);
  pipe('888,342 888,365 905,375', '#b38a6a', 2);
  pipe('898,400 898,325 902,325 902,345', '#b8148c', 2);
  pipe('905,340 905,378', '#8a6248', 3);
  pipe('905,340 955,372', '#b38a6a', 2);
  pipe('912,380 912,335 932,318', '#2590b0', 2);
  pipe('918,340 935,328', '#2a7c98', 3);
  pipe('935,322 945,318 945,332', '#c4a430', 2);
  pipe('933,340 933,298 962,318', '#8c6c24', 1.500);
  pipe('950,347 950,310', '#8a6248', 4);
  pipe('952,308 975,324', '#c9a27c', 2);
  pipe('965,300 965,255', '#8c7a4c', 3);
  pipe('965,253 959,254 959,258 1007,291 1010,300', '#d0b87c', 3);
  valve(964, 294, '#5aa878');
  pipe('1016,298 1017,290 1031,280 1031,300 1052,317 1052,480', '#9a7454', 2.500);
  pipe('1000,303 1000,293 1005,292', '#26b84e', 3);
  valve(941, 338, '#2a8a78');

  // violet exchangers
  pipe('975,326 1012,300', '#bf6cc0', 9);
  out.push('<ellipse cx="975" cy="326" rx="3" ry="4" fill="#7a3c80"/>');
  pipe('989,337 1025,316', '#bf6cc0', 5);
  valve(1016, 295, '#4fa070');
  pipe('960,388 992,368', '#a85cac', 7);
  pipe('905,415 938,396', '#a85cac', 8);
  pipe('922,420 1009,366', '#b868bc', 10);
  pipe('895,483 922,468', '#a45aa8', 7);
  pipe('910,484 934,470', '#a45aa8', 7);
  valve(996, 352, '#4a9a68'); valve(1012, 363, '#5aa878'); valve(945, 385, '#2fa050'); valve(966, 393, '#4a9a68');
  out.push('<path fill="#bdbdbd" d="M1009 338l6-3 1 3 6-5 2 4-4 4 3 2-5 3-4-2-4 2zM1026 349l7-4 3 1 5-4 1 5-4 5-4 4-7-1z"/><path fill="#d8821c" d="M962 362l5-3 4 3-1 6-5 3-3-2zM902 405l4-1 1 6-4 1z"/>');
  pipe('1024,333 1038,341 1038,412', '#14882f', 4);
  pipe('1023,377 1074,342', '#c41c1c', 4);
  pipe('978,405 1015,381', '#b82020', 3);
  pipe('1024,325 1070,352 1070,460', '#6a9ab8', 1);
  pipe('1022,329 1067,356 1067,460', '#5a86a0', 1);
  pipe('1020,333 1073,349 1073,450', '#4a7488', 1);
  tank(980, 397, 22, 46, '#16907a');

  // central drum
  pipe('925,445 948,430', '#1f7650', 25, true);
  pipe('927,440 948,427', '#2c8a62', 12, true);
  out.push('<ellipse cx="923" cy="446" rx="10" ry="13" fill="#1c6a48" transform="rotate(-30 923 446)"/>');
  pipe('912,451 963,417', '#c82424', 2);
  pipe('918,427 961,397', '#b868bc', 9);
  out.push('<ellipse cx="918" cy="427" rx="3" ry="5" fill="#9a50a0"/>');
  pipe('981,402 981,435 1004,455 997,466 997,517', '#a07254', 3);
  pipe('975,487 1058,432', '#7c509c', 4);
  pipe('973,420 973,517', '#7c4a96', 4);
  pipe('940,455 940,517', '#7a4a96', 3);
  out.push('<path fill="#1c941c" d="M900 507l20-10 8 3v17h-30z"/><path fill="#0c6a0c" d="M926 491l17 9v17h-17z"/>');
  tank(958, 478, 15, 20, '#4a8a66');
  pipe('965,479 965,466', '#4a8a66', 4);
  valve(905, 463, '#4a8a66');
  pipe('820,492 865,517', '#1a8672', 12);
  tank(832, 486, 8, 18, '#1a7a5c');
  valve(868, 500, '#1f8a50');
  pipe('880,510 905,495', '#e018b8', 4);
  pipe('820,450 905,500', '#3a94c4', 1.500);
  pipe('875,410 915,436', '#7fd098', 2);
  clutter(110, [[890, 470], [940, 460], [1010, 445], [1060, 455], [1075, 480]], 0.6, 2, 50);

  // right unit
  pipe('1022,415 1055,430 1070,420 1100,401 1108,402 1203,465 1207,475 1207,517', '#1a9c3e', 6);
  pipe('1030,420 1055,437 1102,409 1194,469 1199,478 1199,517', '#64c088', 6);
  pipe('1045,450 1080,472', '#5ed08a', 5);
  pipe('1026,390 1026,440', '#b39868', 2);
  pipe('1020,395 1052,418 1052,500', '#c0a070', 3);
  pipe('1092,400 1092,450', '#a87e5c', 2);
  pipe('1105,399 1105,450', '#8a6a50', 1.500);
  pipe('1060,412 1082,399', '#d42222', 5);
  valve(1070, 404, '#4a9a6a');
  pipe('1137,517 1137,357 1134,354', '#a01474', 2.500);
  pipe('1097,415 1173,465 1173,490', '#6aa4c0', 1.500);
  pipe('1070,517 1160,456', '#a6a6a6', 1.500);
  pipe('1088,517 1150,478', '#d2169a', 1.500);
  pipe('1110,470 1137,450', '#d2169a', 1.500);
  pipe('1100,420 1126,437 1126,447', '#a89848', 1.500);
  pipe('1020,517 1120,448', '#b08260', 2);
  pipe('1022,450 1072,480', '#b08260', 2);
  pipe('1120,450 1120,500', '#8a6248', 2);
  pipe('1153,517 1173,502 1173,517', '#7a4460', 1.500);
  pipe('1112,490 1155,517', '#5ec886', 2);
  out.push('<path fill="#c4c4c4" d="M1059 375h2v3h-2zM1082 381h2v3h-2zM1146 497h2v3h-2zM1040 393h2v3h-2zM1130 503h2v3h-2z"/>');
  tank(1090, 470, 22, 50, '#23583f');
  tank(1081, 456, 31, 22, '#4f9474');
  out.push('<ellipse cx="1088" cy="464" rx="4" ry="4" fill="#9ce0dc"/><path fill="#3c7a5c" d="M1092 446l14-8 4 4-12 9v6h-5z"/>');
  tank(1024, 488, 38, 40, '#3a7a5a');
  out.push('<ellipse cx="1052" cy="502" rx="5" ry="4" fill="#7fc4d0"/>');
  for (var i = 0; i < 30; i++) {
    var x = 1063 + rnd() * 22, y = 482 + rnd() * 30;
    pipe(x.toFixed(1) + ',' + y.toFixed(1) + ' ' + (x + 5).toFixed(1) + ',' + (y - 3).toFixed(1) + ' ' + (x + 5).toFixed(1) + ',' + (y + 3).toFixed(1), pick(['#e018b0', '#c21698', '#8a1470']), 1.500);
  }
  pipe('1097,467 1110,464 1110,480 1099,478', '#d0189a', 2);
  clutter(60, [[1078, 480], [1100, 478], [1120, 490], [1130, 510]], 0.6, 1.500, 20);
  document.getElementById('plant').innerHTML = out.join('');
})();
```
